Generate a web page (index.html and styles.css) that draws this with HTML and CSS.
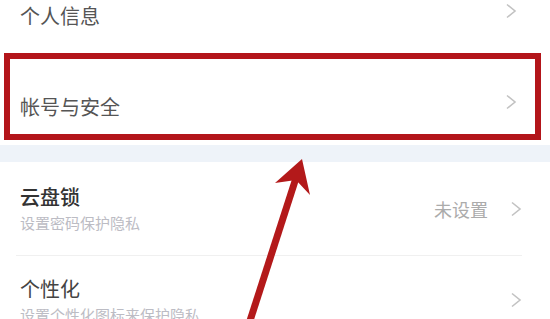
FILE: index.html
```html
<!DOCTYPE html>
<html lang="zh">
<head>
<meta charset="utf-8">
<link rel="stylesheet" href="styles.css">
</head>
<body>
<div class="page">
  <div class="row row-top">
    <span class="title">个人信息</span>
    <svg class="chev chev-top" viewBox="0 0 12 16" width="12" height="16"><path d="M2 1.5 L10 8 L2 14.5" fill="none" stroke="#c2c2c2" stroke-width="1.6"/></svg>
  </div>
  <div class="box">
    <span class="title">帐号与安全</span>
    <svg class="chev chev-box" viewBox="0 0 12 16" width="12" height="16"><path d="M2 1.5 L10 8 L2 14.5" fill="none" stroke="#c2c2c2" stroke-width="1.6"/></svg>
  </div>
  <div class="band"></div>
  <div class="item item-lock">
    <div class="texts">
      <span class="title dark">云盘锁</span>
      <span class="sub">设置密码保护隐私</span>
    </div>
    <div class="right">
      <span class="value">未设置</span>
      <svg class="chev" viewBox="0 0 12 16" width="12" height="16"><path d="M2 1.5 L10 8 L2 14.5" fill="none" stroke="#c2c2c2" stroke-width="1.6"/></svg>
    </div>
  </div>
  <div class="item item-style">
    <div class="texts">
      <span class="title dark2">个性化</span>
      <span class="sub">设置个性化图标来保护隐私</span>
    </div>
    <div class="right right-style">
      <svg class="chev" viewBox="0 0 12 16" width="12" height="16"><path d="M2 1.5 L10 8 L2 14.5" fill="none" stroke="#c2c2c2" stroke-width="1.6"/></svg>
    </div>
  </div>
  <svg class="arrow" viewBox="0 0 550 319" width="550" height="319">
    <line x1="296" y1="178" x2="247" y2="330" stroke="#b3191a" stroke-width="7"/>
    <polygon points="302,159 310,195 296,180 275,183" fill="#b3191a"/>
  </svg>
</div>
</body>
</html>
```

FILE: styles.css
```css
html, body {
  margin: 0;
  padding: 0;
  background: #ffffff;
}

.page {
  position: relative;
  width: 550px;
  height: 319px;
  overflow: hidden;
  font-family: "Noto Sans CJK SC", "Noto Sans", sans-serif;
}

.title {
  font-size: 20px;
  line-height: 22px;
  color: #555555;
}

.title.dark {
  color: #333333;
  font-weight: 500;
}

.title.dark2 {
  color: #444444;
}

.row-top {
  height: 53px;
  display: flex;
  justify-content: space-between;
  align-items: flex-start;
  padding: 5px 33px 0 20px;
  box-sizing: border-box;
}

.chev {
  display: block;
  flex: none;
}

.chev-top {
  margin-top: -2px;
}

.box {
  margin-left: 4px;
  width: 537px;
  height: 87px;
  box-sizing: border-box;
  border: 6px solid #b3151a;
  display: flex;
  justify-content: space-between;
  align-items: flex-end;
  padding: 0 18px 16px 10px;
}

.chev-box {
  margin-bottom: 8px;
}

.band {
  margin-top: 5px;
  height: 17px;
  background: #eef3f9;
}

.item {
  display: flex;
  justify-content: space-between;
  margin-left: 16px;
  margin-right: 28px;
  padding-left: 4px;
  box-sizing: border-box;
}

.item-lock {
  height: 94px;
  padding-top: 24px;
  border-bottom: 1px solid #f0f0f0;
}

.item-style {
  padding-top: 22px;
}

.texts {
  display: flex;
  flex-direction: column;
  gap: 7px;
}

.sub {
  font-size: 15px;
  line-height: 16px;
  color: #bcbcc4;
}

.right {
  display: flex;
  align-items: center;
  gap: 22px;
  padding-top: 13px;
  align-self: flex-start;
}

.right-style {
  padding-top: 14px;
}

.value {
  font-size: 18px;
  line-height: 20px;
  color: #ababab;
}

.arrow {
  position: absolute;
  left: 0;
  top: 0;
}
```
